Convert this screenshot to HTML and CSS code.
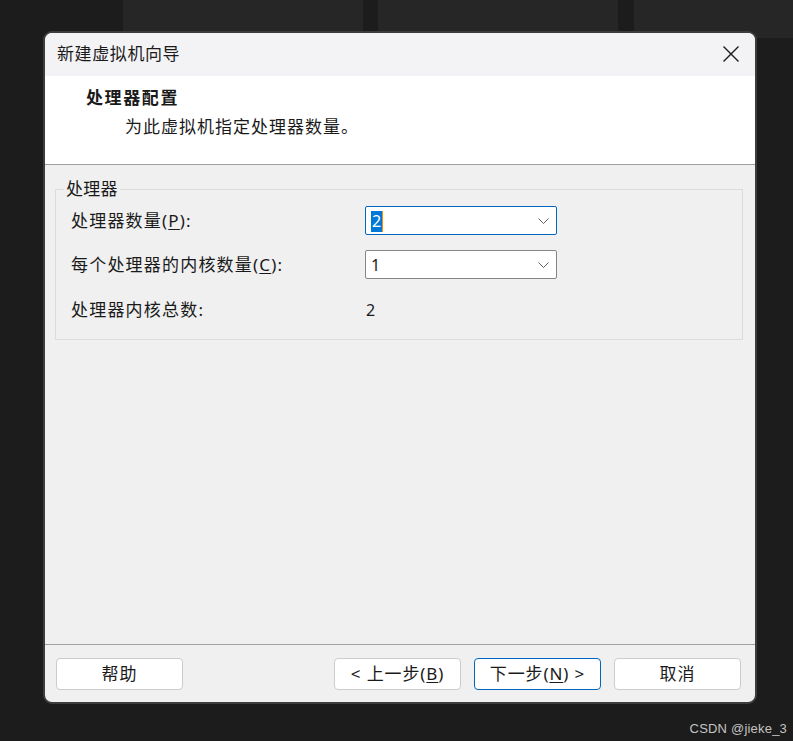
FILE: index.html
```html
<!DOCTYPE html>
<html lang="zh-CN">
<head>
<meta charset="utf-8">
<title>新建虚拟机向导</title>
<link rel="stylesheet" href="styles.css">
</head>
<body>
<div class="desktop">
  <div class="panel panel-a"></div>
  <div class="panel panel-b"></div>
  <div class="panel panel-c"></div>

  <div class="dialog">
    <div class="titlebar">
      <span class="title">新建虚拟机向导</span>
      <svg class="close" width="16" height="16" viewBox="0 0 16 16"><path d="M0.5 0.5 L15.5 15.5 M15.5 0.5 L0.5 15.5" stroke="#1a1a1a" stroke-width="1.4" fill="none"/></svg>
    </div>
    <div class="header">
      <div class="h-title">处理器配置</div>
      <div class="h-sub">为此虚拟机指定处理器数量。</div>
    </div>
    <div class="body">
      <div class="group">
        <span class="legend">处理器</span>
        <div class="rows">
          <div class="label">处理器数量(<u>P</u>):</div>
          <div class="select focused"><span class="sel-text"><span class="hl">2</span></span><svg class="chev" width="11" height="6" viewBox="0 0 11 6"><path d="M0.5 0.5 L5.5 5.5 L10.5 0.5" stroke="#606060" stroke-width="1" fill="none"/></svg></div>
          <div class="label">每个处理器的内核数量(<u>C</u>):</div>
          <div class="select"><span class="sel-text">1</span><svg class="chev" width="11" height="6" viewBox="0 0 11 6"><path d="M0.5 0.5 L5.5 5.5 L10.5 0.5" stroke="#606060" stroke-width="1" fill="none"/></svg></div>
          <div class="label last">处理器内核总数:</div>
          <div class="value last">2</div>
        </div>
      </div>
    </div>
    <div class="footer">
      <button class="btn">帮助</button>
      <div class="spacer"></div>
      <button class="btn">&lt; 上一步(<u>B</u>)</button>
      <button class="btn default">下一步(<u>N</u>) &gt;</button>
      <button class="btn">取消</button>
    </div>
  </div>

  <div class="watermark">CSDN @jieke_3</div>
</div>
</body>
</html>
```

FILE: styles.css
```css
* { box-sizing: border-box; }
html, body { margin: 0; padding: 0; background: #1c1c1c; }
body {
  font-family: "Noto Sans", "Noto Sans CJK SC", sans-serif;
  color: #1a1a1a;
}
.desktop {
  position: relative;
  width: 793px;
  height: 741px;
  overflow: hidden;
  background: #1c1c1c;
}
.panel {
  position: absolute;
  top: 0;
  background: #262626;
}
.panel-a { left: 123px; width: 240px; height: 120px; }
.panel-b { left: 378px; width: 240px; height: 120px; }
.panel-c { left: 634px; width: 159px; height: 38px; }

.dialog {
  position: absolute;
  left: 43px;
  top: 31px;
  width: 714px;
  height: 673px;
  border: 2px solid #3d3d3d;
  border-radius: 9px;
  overflow: hidden;
  background: #f0f0f0;
  display: flex;
  flex-direction: column;
}
.titlebar {
  height: 43px;
  flex: none;
  background: #f3f3f6;
  display: flex;
  align-items: center;
  justify-content: space-between;
  padding: 0 16px 2px 12px;
}
.title { font-size: 17px; line-height: 24px; letter-spacing: 0.6px; }
.close { display: block; }

.header {
  height: 89px;
  flex: none;
  background: #ffffff;
  border-bottom: 1px solid #a0a0a0;
  padding: 10px 0 0 41px;
}
.h-title { font-size: 17px; line-height: 24px; font-weight: 700; letter-spacing: 1.6px; }
.h-sub { font-size: 17px; line-height: 24px; margin-top: 5px; padding-left: 39px; letter-spacing: 1px; }

.body {
  flex: 1;
  padding: 24px 12px 0 10px;
}
.group {
  position: relative;
  border: 1px solid #dcdcdc;
  padding: 16px 0 16px 15px;
}
.legend {
  position: absolute;
  left: 8px;
  top: -13px;
  padding: 0 2px;
  background: #f0f0f0;
  font-size: 17px;
  line-height: 24px;
  letter-spacing: 0.3px;
}
.rows {
  display: grid;
  grid-template-columns: 294px 192px;
  grid-auto-rows: 29px;
  row-gap: 15px;
  align-items: center;
}
.label { font-size: 17px; line-height: 24px; letter-spacing: 1.2px; }
.label.last, .value.last { margin-top: 3px; }
.value { font-size: 16px; line-height: 24px; padding-left: 1px; }
u { text-decoration: underline; text-underline-offset: 2px; }

.select {
  height: 29px;
  background: #ffffff;
  border: 1px solid #868686;
  border-radius: 2px;
  display: flex;
  align-items: center;
  justify-content: space-between;
  padding: 0 7px 0 5px;
}
.select.focused { border-color: #0067c0; }
.sel-text { font-size: 16px; line-height: 22px; }
.hl {
  display: inline-block;
  background: #0078d7;
  color: #ffffff;
  padding: 0 1px;
  border-right: 1px solid #ff8c00;
  line-height: 21px;
}
.chev { display: block; }

.footer {
  height: 58px;
  flex: none;
  border-top: 1px solid #a0a0a0;
  display: flex;
  align-items: flex-start;
  gap: 13px;
  padding: 13px 14px 0 11px;
}
.spacer { flex: 1; }
.btn {
  width: 127px;
  height: 32px;
  background: #ffffff;
  border: 1px solid #cccccc;
  border-radius: 4px;
  font-family: "Noto Sans", "Noto Sans CJK SC", sans-serif;
  font-size: 17px;
  line-height: 22px;
  color: #1a1a1a;
  padding: 0;
  letter-spacing: 0.9px;
}
.btn.default { border-color: #0067c0; }
.footer .btn:first-child { margin-right: -13px; }

.watermark {
  position: absolute;
  right: 6px;
  bottom: 5px;
  font-family: "Liberation Sans", Arial, sans-serif;
  font-size: 13px;
  letter-spacing: 0.2px;
  color: #c4c4c4;
}
```
